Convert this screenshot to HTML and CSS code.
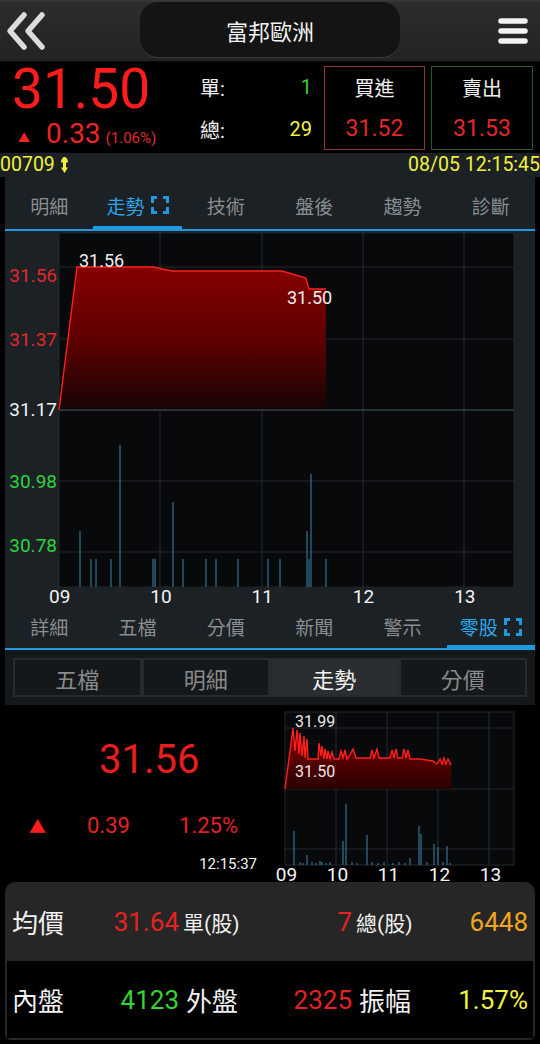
FILE: index.html
```html
<!DOCTYPE html>
<html lang="zh-Hant">
<head>
    <meta charset="UTF-8">
    <meta name="viewport" content="width=device-width, initial-scale=1.0">
    <title>富邦歐洲</title>

    <link rel="stylesheet" href="styles.css">
</head>
<body>
    <header class="topbar">
        <svg class="back" width="50" height="62" viewBox="0 0 50 62">
            <polyline points="24,15 10,31 24,47" />
            <polyline points="42,15 28,31 42,47" />
        </svg>
        <div class="title">富邦歐洲</div>
        <svg class="menu" width="30" height="62" viewBox="0 0 30 62">
            <line x1="3" y1="21" x2="27" y2="21" />
            <line x1="3" y1="31" x2="27" y2="31" />
            <line x1="3" y1="41" x2="27" y2="41" />
        </svg>
    </header>

    <section class="quote">
        <div class="last">
            <div class="price">31.50</div>
            <div class="chg">
                <span class="tri">▲</span>
                <span class="num">0.33</span>
                <span class="pct">(1.06%)</span>
            </div>
        </div>
        <div class="counts">
            <div class="crow"><span>單:</span><span class="green">1</span></div>
            <div class="crow"><span>總:</span><span class="yellow">29</span></div>
        </div>
        <div class="order buy">
            <div class="otitle">買進</div>
            <div class="oprice">31.52</div>
        </div>
        <div class="order sell">
            <div class="otitle">賣出</div>
            <div class="oprice">31.53</div>
        </div>
    </section>

    <div class="infobar">
        <div class="code">00709
            <svg class="swap" width="9" height="18" viewBox="0 0 9 18">
                <path d="M1 6.5 C1 3 3 1 4.5 1 C6 1 8 3 8 6.5 Z M3 6.5 H6 V11.5 H3 Z M1 11.5 H8 L4.5 17 Z" />
            </svg>
        </div>
        <div class="stamp">08/05 12:15:45</div>
    </div>

    <div class="panel">
        <nav class="tabs">
            <div class="tab">明細</div>
            <div class="tab on">走勢
                <svg class="full" width="18" height="18" viewBox="0 0 18 18">
                    <path d="M1.5 7 V1.5 H6 M12 1.5 H16.5 V7 M16.5 11 V16.5 H12 M6 16.5 H1.5 V11" />
                </svg>
            </div>
            <div class="tab">技術</div>
            <div class="tab">盤後</div>
            <div class="tab">趨勢</div>
            <div class="tab">診斷</div>
        </nav>

        <svg class="trend" width="530" height="356" viewBox="5 232 530 356">
            <defs>
                <linearGradient id="mainFill" x1="0" y1="0" x2="0" y2="1">
                    <stop offset="0" stop-color="#860000" />
                    <stop offset="0.55" stop-color="#5a0000" />
                    <stop offset="1" stop-color="#160405" />
                </linearGradient>
            </defs>
            <rect x="59" y="234" width="455" height="354" fill="#07090a" stroke="#20262a" />
            <g class="grid">
                <line x1="59" y1="268" x2="514" y2="268" />
                <line x1="59" y1="340" x2="514" y2="340" />
                <line x1="59" y1="482" x2="514" y2="482" />
                <line x1="59" y1="553" x2="514" y2="553" />
                <line x1="160" y1="234" x2="160" y2="588" />
                <line x1="262" y1="234" x2="262" y2="588" />
                <line x1="363" y1="234" x2="363" y2="588" />
                <line x1="464" y1="234" x2="464" y2="588" />
            </g>
            <polygon fill="url(#mainFill)" points="59,411 77,268 153,268 172,272 282,272 306,279 309,290 326,290 326,411" />
            <line x1="59" y1="411" x2="514" y2="411" stroke="#34414a" stroke-width="1.5" />
            <polyline class="pline" points="59,411 77,268 153,268 172,272 282,272 306,279 309,290 326,290" />
            <text class="peak" x="79" y="268">31.56</text>
            <text class="peak" x="287" y="305">31.50</text>

            <g class="axis">
                <text class="up" x="57" y="283">31.56</text>
                <text class="up" x="57" y="347">31.37</text>
                <text class="flat" x="57" y="417">31.17</text>
                <text class="down" x="57" y="489">30.98</text>
                <text class="down" x="57" y="553">30.78</text>
            </g>

            <g class="vol">
                <line x1="80" y1="532" x2="80" y2="588" />
                <line x1="91" y1="560" x2="91" y2="588" />
                <line x1="96" y1="560" x2="96" y2="588" />
                <line x1="111" y1="560" x2="111" y2="588" />
                <line x1="120" y1="446" x2="120" y2="588" />
                <line x1="153" y1="560" x2="153" y2="588" />
                <line x1="155" y1="560" x2="155" y2="588" />
                <line x1="173" y1="503" x2="173" y2="588" />
                <line x1="183" y1="560" x2="183" y2="588" />
                <line x1="206" y1="560" x2="206" y2="588" />
                <line x1="216" y1="560" x2="216" y2="588" />
                <line x1="238" y1="560" x2="238" y2="588" />
                <line x1="268" y1="560" x2="268" y2="588" />
                <line x1="280" y1="560" x2="280" y2="588" />
                <line x1="307" y1="532" x2="307" y2="588" />
                <line x1="309" y1="560" x2="309" y2="588" />
                <line x1="311" y1="475" x2="311" y2="588" />
                <line x1="326" y1="560" x2="326" y2="588" />
            </g>
        </svg>
        <div class="hours">
            <span>09</span><span>10</span><span>11</span><span>12</span><span>13</span>
        </div>

        <nav class="tabs low">
            <div class="tab">詳細</div>
            <div class="tab">五檔</div>
            <div class="tab">分價</div>
            <div class="tab">新聞</div>
            <div class="tab">警示</div>
            <div class="tab on">零股
                <svg class="full" width="18" height="18" viewBox="0 0 18 18">
                    <path d="M1.5 7 V1.5 H6 M12 1.5 H16.5 V7 M16.5 11 V16.5 H12 M6 16.5 H1.5 V11" />
                </svg>
            </div>
        </nav>
    </div>

    <div class="segwrap">
        <div class="seg">
            <div class="segitem">五檔</div>
            <div class="segitem">明細</div>
            <div class="segitem on">走勢</div>
            <div class="segitem">分價</div>
        </div>
    </div>

    <section class="odd">
        <div class="oddinfo">
            <div class="oddprice">31.56</div>
            <div class="oddchg">
                <span class="otri">▲</span>
                <span class="oval">0.39</span>
                <span class="opct">1.25%</span>
            </div>
            <div class="oddtime">12:15:37</div>
        </div>

        <div class="minibox">
            <svg class="mini" width="246" height="162" viewBox="274 706 246 162">
                <defs>
                    <linearGradient id="miniFill" x1="0" y1="0" x2="0" y2="1">
                        <stop offset="0" stop-color="#8a0000" />
                        <stop offset="1" stop-color="#2a0000" />
                    </linearGradient>
                </defs>
                <rect x="285" y="713" width="229" height="153" fill="#07090a" stroke="#262b2f" />
                <g class="grid">
                    <line x1="285" y1="729" x2="514" y2="729" />
                    <line x1="285" y1="790" x2="514" y2="790" />
                    <line x1="285" y1="850" x2="514" y2="850" />
                    <line x1="336" y1="713" x2="336" y2="866" />
                    <line x1="387" y1="713" x2="387" y2="866" />
                    <line x1="438" y1="713" x2="438" y2="866" />
                    <line x1="489" y1="713" x2="489" y2="866" />
                </g>
                <polygon fill="url(#miniFill)" points="285,790 293,729 295,752 297,731 299,755 300,734 302,757 304,737 305,759 307,740 308,760 318,760 319,744 321,757 322,747 324,760 325,750 327,760 328,752 330,760 332,753 334,760 339,760 341,752 343,759 345,751 347,760 350,756 353,750 356,759 370,759 372,751 374,759 377,750 379,759 390,759 392,751 394,759 396,750 398,759 402,759 404,750 406,759 408,751 410,760 420,760 433,762 437,765 440,760 442,765 444,759 446,765 448,760 451,766 451,790" />
                <polyline class="pline" points="285,790 293,729 295,752 297,731 299,755 300,734 302,757 304,737 305,759 307,740 308,760 318,760 319,744 321,757 322,747 324,760 325,750 327,760 328,752 330,760 332,753 334,760 339,760 341,752 343,759 345,751 347,760 350,756 353,750 356,759 370,759 372,751 374,759 377,750 379,759 390,759 392,751 394,759 396,750 398,759 402,759 404,750 406,759 408,751 410,760 420,760 433,762 437,765 440,760 442,765 444,759 446,765 448,760 451,766" />
                <text class="mlabel" x="295" y="728">31.99</text>
                <text class="mlabel" x="295" y="778">31.50</text>

                <g class="vol">
                    <line x1="294" y1="832" x2="294" y2="866" />
                    <line x1="300" y1="863" x2="300" y2="866" />
                    <line x1="303" y1="864" x2="303" y2="866" />
                    <line x1="307" y1="856" x2="307" y2="866" />
                    <line x1="312" y1="863" x2="312" y2="866" />
                    <line x1="316" y1="864" x2="316" y2="866" />
                    <line x1="320" y1="862" x2="320" y2="866" />
                    <line x1="322" y1="863" x2="322" y2="866" />
                    <line x1="326" y1="864" x2="326" y2="866" />
                    <line x1="330" y1="863" x2="330" y2="866" />
                    <line x1="343" y1="842" x2="343" y2="866" />
                    <line x1="346" y1="805" x2="346" y2="866" />
                    <line x1="352" y1="863" x2="352" y2="866" />
                    <line x1="357" y1="864" x2="357" y2="866" />
                    <line x1="367" y1="836" x2="367" y2="866" />
                    <line x1="372" y1="863" x2="372" y2="866" />
                    <line x1="378" y1="864" x2="378" y2="866" />
                    <line x1="384" y1="863" x2="384" y2="866" />
                    <line x1="393" y1="864" x2="393" y2="866" />
                    <line x1="399" y1="863" x2="399" y2="866" />
                    <line x1="405" y1="864" x2="405" y2="866" />
                    <line x1="410" y1="859" x2="410" y2="866" />
                    <line x1="419" y1="827" x2="419" y2="866" />
                    <line x1="421" y1="835" x2="421" y2="866" />
                    <line x1="427" y1="863" x2="427" y2="866" />
                    <line x1="434" y1="845" x2="434" y2="866" />
                    <line x1="438" y1="848" x2="438" y2="866" />
                    <line x1="443" y1="863" x2="443" y2="866" />
                    <line x1="447" y1="847" x2="447" y2="866" />
                    <line x1="450" y1="864" x2="450" y2="866" />
                </g>
            </svg>
            <div class="mhours">
                <span>09</span><span>10</span><span>11</span><span>12</span><span>13</span>
            </div>
        </div>
    </section>

    <section class="stats">
        <div class="srow">
            <div class="slabel">均價</div>
            <div class="sval red">31.64</div>
            <div class="sunit">單(股)</div>
            <div class="sval red">7</div>
            <div class="sunit">總(股)</div>
            <div class="sval orange">6448</div>
        </div>
        <div class="srow dark">
            <div class="slabel">內盤</div>
            <div class="sval green">4123</div>
            <div class="slabel sub">外盤</div>
            <div class="sval red">2325</div>
            <div class="slabel sub">振幅</div>
            <div class="sval yellow">1.57%</div>
        </div>
    </section>
</body>
</html>
```

FILE: styles.css
```css
*{
    font-family: Roboto, "Noto Sans CJK TC", sans-serif;
    box-sizing: border-box;
}
body{
    margin: 0;
    width: 540px;
    height: 1044px;
    overflow: hidden;
    background-color: #000;
    color: #f0f0f0;
}

/* header */
.topbar{
    height: 62px;
    display: grid;
    grid-template-columns: 140px 260px 140px;
    background: linear-gradient(#3a3a3a 0, #2c2c2c 3px, #232323 100%);
    border-bottom: 1px solid #0c0c0c;
}
.back polyline{
    fill: none;
    stroke: #dcdcdc;
    stroke-width: 5.5;
    stroke-linecap: round;
    stroke-linejoin: round;
}
.title{
    margin-top: 2px;
    height: 55px;
    border-radius: 18px;
    background-color: #141414;
    box-shadow: 0 1px 0 #3a3a3a;
    display: flex;
    align-items: center;
    justify-content: center;
    font-size: 22px;
    color: #f2f2f2;
}
.menu{
    justify-self: end;
    margin-right: 12px;
}
.menu line{
    stroke: #f4f4f4;
    stroke-width: 5.5;
    stroke-linecap: round;
}

/* quote */
.quote{
    display: flex;
    height: 91px;
}
.last{
    width: 200px;
    padding-left: 12px;
}
.price{
    font-size: 55px;
    line-height: 54px;
    color: #ff1c1c;
}
.chg{
    display: flex;
    align-items: baseline;
    line-height: 30px;
    margin-top: 3px;
    color: #f02424;
}
.chg .tri{
    font-size: 12px;
    margin-left: 6px;
}
.chg .num{
    font-size: 28px;
    margin-left: 16px;
}
.chg .pct{
    font-size: 15px;
    margin-left: 5px;
    color: #e02a2a;
}
.counts{
    width: 112px;
    padding-top: 4px;
}
.crow{
    height: 42px;
    display: flex;
    align-items: center;
    justify-content: space-between;
    font-size: 20px;
}
.green{ color: #35d335; }
.yellow{ color: #f2f240; }
.red{ color: #e42222; }
.orange{ color: #f2a51e; }

.order{
    margin-top: 4px;
    height: 84px;
    border: 1.5px solid #8a3a3a;
    text-align: center;
    padding-top: 10px;
}
.buy{
    width: 101px;
    margin-left: 12px;
}
.sell{
    width: 102px;
    margin-left: 6px;
    border-color: #235c23;
}
.otitle{
    font-size: 20px;
    line-height: 24px;
}
.oprice{
    margin-top: 14px;
    font-size: 23px;
    line-height: 28px;
    color: #e22828;
}

/* code + time */
.infobar{
    height: 24px;
    background-color: #1b2125;
    display: flex;
    justify-content: space-between;
    font-size: 19.5px;
    line-height: 24px;
    color: #f2f23c;
}
.code{
    display: flex;
    align-items: center;
}
.swap{
    margin-left: 5px;
    fill: #f2f23c;
}

/* chart panel */
.panel{
    margin: 0 5px;
    background-color: #1b2125;
}
.tabs{
    display: grid;
    grid-template-columns: repeat(6, 1fr);
    height: 54px;
    padding-top: 4px;
    border-bottom: 2px solid #1e9be0;
}
.tabs.low{
    height: 45px;
    padding-top: 0;
}
.tab{
    display: flex;
    align-items: center;
    justify-content: center;
    font-size: 19px;
    color: #8a8e91;
}
.tab.on{
    color: #2ba6ea;
    box-shadow: inset 0 -3px 0 #1e9be0;
}
.full{
    margin-left: 6px;
}
.full path{
    fill: none;
    stroke: #1e9be0;
    stroke-width: 3;
}
.trend{
    display: block;
}
.hours{
    display: flex;
    height: 18px;
    padding-left: 4px;
    padding-top: 1px;
    font-size: 19px;
    line-height: 18px;
    color: #f4f4f4;
}
.hours span{
    width: 101.3px;
    text-align: center;
}
.grid line{
    stroke: #22292d;
    stroke-width: 1.2;
}
.pline{
    fill: none;
    stroke: #ff1e1e;
    stroke-width: 1.4;
}
.peak{
    font-size: 18px;
    fill: #eeeeee;
}
.axis text{
    font-size: 19px;
    text-anchor: end;
}
.axis .up{ fill: #e2262a; }
.axis .flat{ fill: #f2f2f2; }
.axis .down{ fill: #2fd13a; }
.vol line{
    stroke: #2f6a88;
    stroke-width: 1.3;
}

/* segmented switch */
.segwrap{
    height: 55px;
    margin: 0 5px;
    padding: 8px 8px 0;
    background-color: #14181b;
}
.seg{
    display: grid;
    grid-template-columns: repeat(4, 1fr);
    height: 39px;
}
.segitem{
    display: flex;
    align-items: center;
    justify-content: center;
    border: 2px solid #272b2e;
    background-color: #15181b;
    font-size: 22px;
    color: #8a8a8a;
}
.segitem.on{
    background-color: #2b2e31;
    color: #f2f2f2;
}

/* odd lot */
.odd{
    display: flex;
    height: 177px;
}
.oddinfo{
    width: 261px;
}
.oddprice{
    margin-top: 35px;
    padding-left: 99px;
    font-size: 40px;
    line-height: 40px;
    color: #e81e1e;
}
.oddchg{
    display: flex;
    align-items: baseline;
    margin-top: 33px;
    line-height: 26px;
    color: #e42222;
}
.otri{
    width: 87px;
    padding-left: 29px;
    font-size: 17px;
    color: #ff1c1c;
}
.oval{
    width: 92px;
    font-size: 22px;
}
.opct{
    font-size: 22px;
}
.oddtime{
    margin-top: 15px;
    text-align: right;
    padding-right: 4px;
    font-size: 15px;
    line-height: 18px;
    color: #f4f4f4;
}
.minibox{
    width: 259px;
}
.mini{
    display: block;
    margin-left: 13px;
}
.mhours{
    display: flex;
    height: 15px;
    font-size: 19px;
    line-height: 16px;
    color: #f4f4f4;
}
.mhours span{
    width: 51px;
    text-align: center;
}
.mlabel{
    font-size: 16px;
    fill: #e8e8e8;
}

/* stats */
.stats{
    margin: 0 5px;
    padding-bottom: 2px;
    border-radius: 10px 10px 6px 6px;
    background-color: #262626;
}
.srow{
    display: grid;
    grid-template-columns: 88px 79px 81px 92px 68px 108px;
    align-items: center;
    height: 79px;
    padding: 0 7px;
}
.srow.dark{
    height: 77px;
    margin: 0 2px;
    padding: 0 5px;
    background-color: #000;
}
.slabel{
    font-size: 26px;
}
.sunit{
    padding-left: 4px;
    font-size: 21px;
}
.slabel.sub{
    padding-left: 7px;
}
.sval{
    text-align: right;
    font-size: 26px;
}
```
